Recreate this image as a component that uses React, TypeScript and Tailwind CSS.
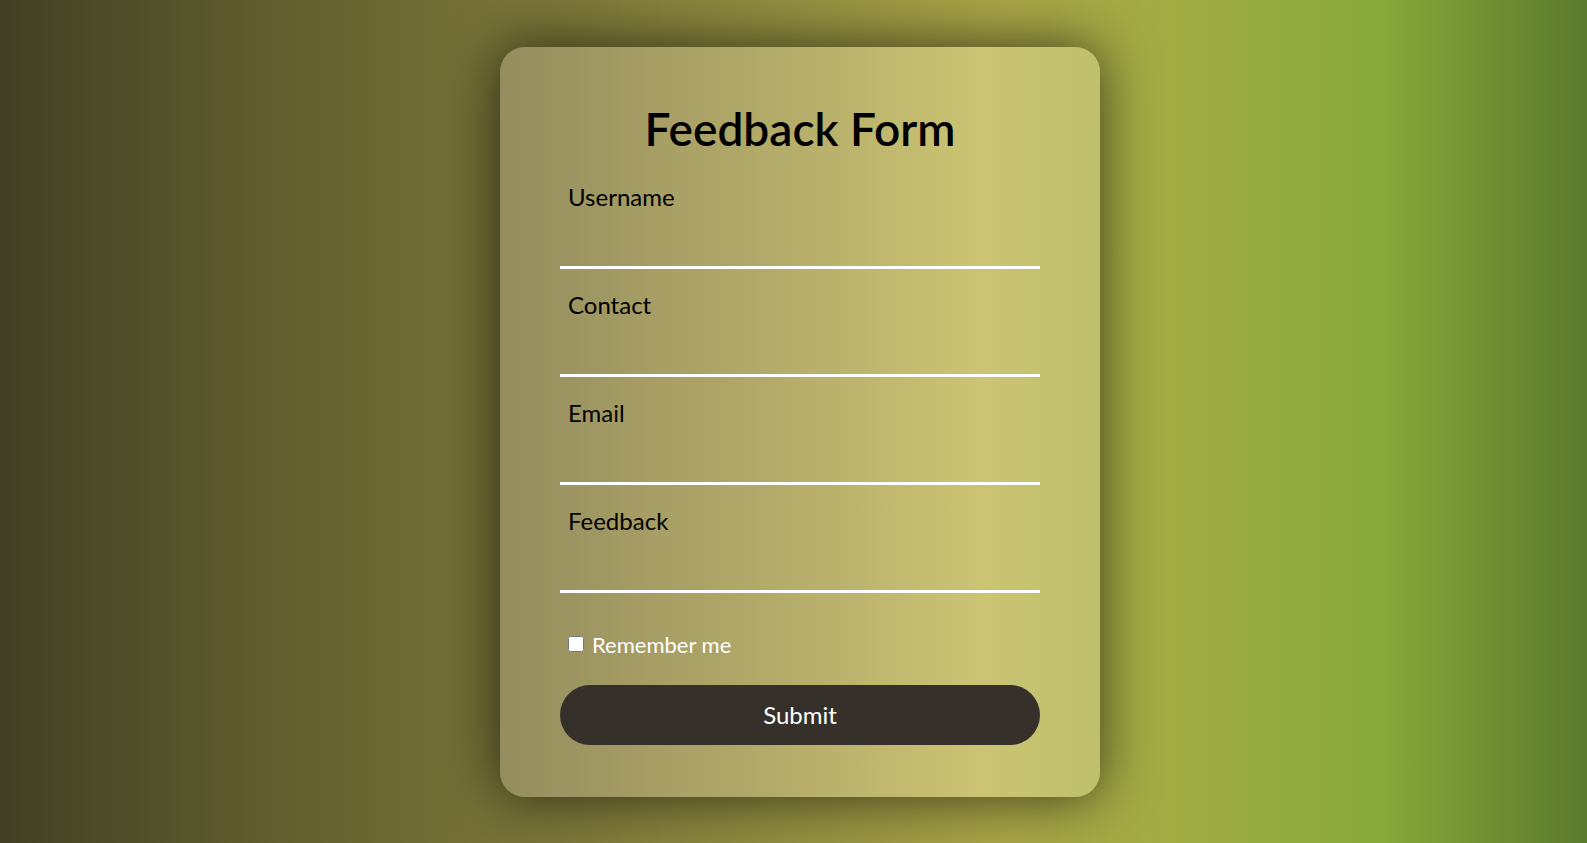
import React from "react";

const fields = ["Username", "Contact", "Email", "Feedback"];

const App = () => {
  return (
    <div
      className="min-h-screen flex items-center justify-center pl-[13px] bg-[linear-gradient(90deg,#414024_0%,#646130_19%,#7b773a_35%,#a9a548_63%,#a2ad44_74%,#87a83a_87%,#5c7a2d_100%)]"
      style={{ fontFamily: "Lato, 'Open Sans', sans-serif" }}
    >
      <form className="w-[600px] rounded-[25px] px-[60px] pt-[54px] pb-[52px] bg-[linear-gradient(90deg,#958d5e_0%,#b6ae6a_50%,#cbc473_80%,#bec06c_100%)] shadow-[0_0_55px_rgba(0,0,0,0.65)]">
        <h1 className="text-center text-[46px] leading-[56px] font-semibold text-black pb-1">
          Feedback Form
        </h1>

        {fields.map((f) => (
          <div key={f} className="mt-5 flex flex-col">
            <label className="px-2 text-[24px] leading-[32px] text-black">{f}</label>
            <input
              type="text"
              className="h-[56px] bg-transparent border-b-[3px] border-white outline-none px-2 text-[22px] text-black"
            />
          </div>
        ))}

        <div className="mt-[38px] flex items-center gap-2 px-2 h-[28px]">
          <input type="checkbox" className="w-4 h-4 m-0 -mt-[2px]" />
          <span className="text-[22px] leading-[28px] text-white">Remember me</span>
        </div>

        <button
          type="button"
          className="mt-[26px] w-full h-[60px] rounded-full bg-[#35312a] text-white text-[24px]"
        >
          Submit
        </button>
      </form>
    </div>
  );
};

export default App;
